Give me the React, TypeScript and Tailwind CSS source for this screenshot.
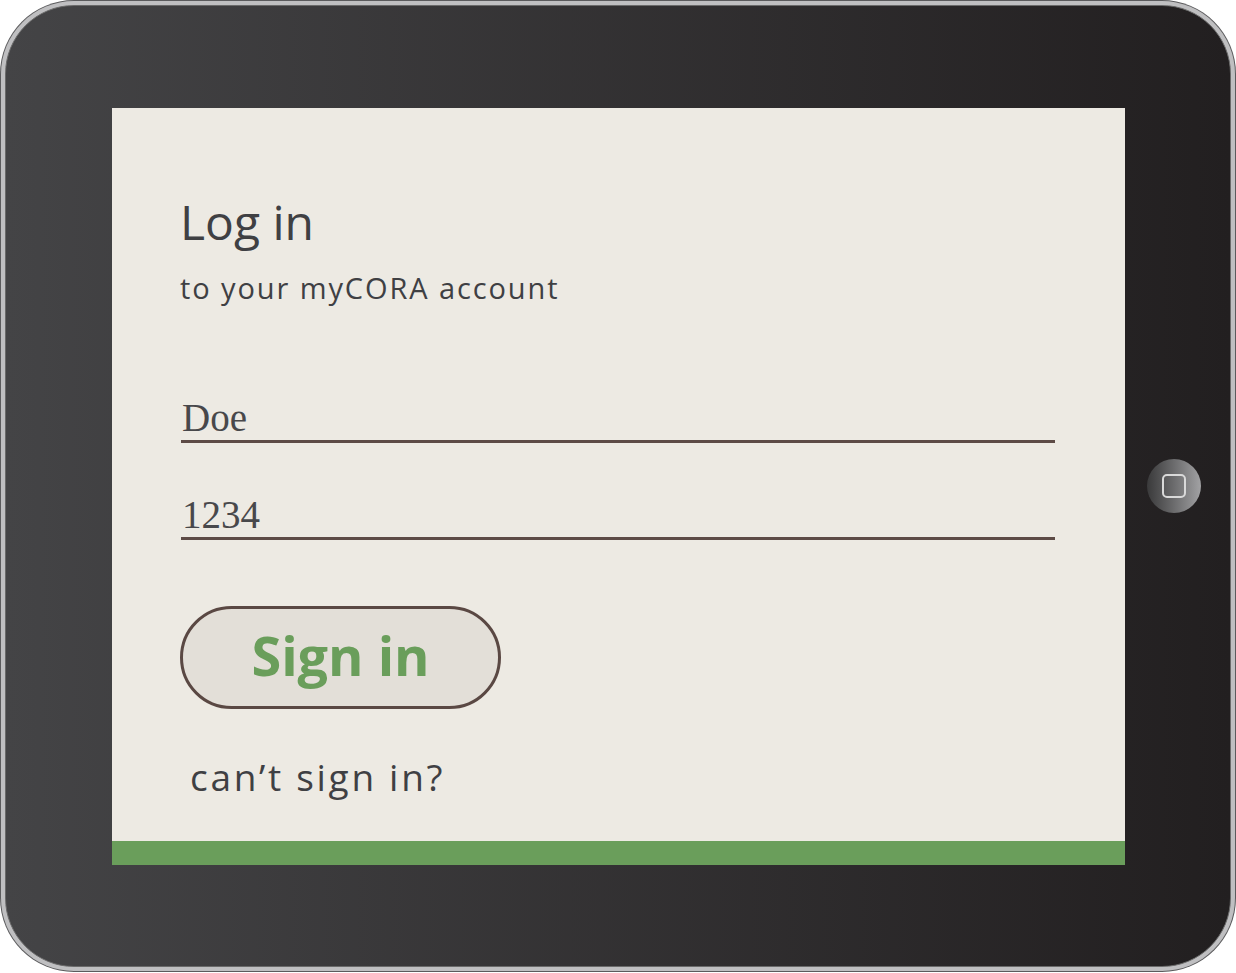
export default function App() {
  return (
    <div className="w-[1236px] h-[973px] bg-white">
      {/* Tablet frame */}
      <div className="w-[1236px] h-[972px] rounded-[74px] bg-[#5b5b5d] p-[1px]">
        <div className="w-full h-full rounded-[73px] bg-[#bfbfc1] p-[4px]">
          <div className="w-full h-full rounded-[69px] bg-gradient-to-r from-[#444446] to-[#221f20] border border-[#6a6a6a] flex items-center pl-[106px]">
            {/* Screen */}
            <div className="w-[1013px] h-[757px] bg-[#edeae3] flex flex-col">
              <div
                className="flex-1 pl-[68px] pr-[70px] pt-[87px] text-[#3f4043]"
                style={{ fontFamily: '"Open Sans", "Noto Sans", sans-serif' }}
              >
                <h1 className="text-[48px] leading-[54px]">Log in</h1>
                <p className="text-[29px] leading-[34px] mt-[22px] tracking-[1.9px]">to your myCORA account</p>

                <div className="mt-[91px] text-[#48484b]" style={{ fontFamily: '"Liberation Serif", serif' }}>
                  <div className="text-[39px] leading-[44px] pl-[1px] border-b-[3px] border-[#5d4b46] ml-[1px]">Doe</div>
                  <div className="text-[39px] leading-[44px] pl-[1px] border-b-[3px] border-[#5d4b46] ml-[1px] mt-[50px]">1234</div>
                </div>

                <button className="mt-[66px] w-[321px] h-[103px] rounded-full border-[3px] border-[#5a4843] bg-[#e3dfd8] flex items-center justify-center">
                  <span className="text-[54px] font-bold text-[#6a9e5b] leading-none -mt-[4px]">Sign in</span>
                </button>

                <p className="text-[37px] leading-[40px] mt-[48px] ml-[10px] tracking-[2.7px]">can’t sign in?</p>
              </div>
              <div className="h-[24px] bg-[#6a9e5b]" />
            </div>

            {/* Home button */}
            <div className="ml-[22px] w-[54px] h-[54px] rounded-full bg-gradient-to-r from-[#3a3a3b] to-[#a2a2a4] flex items-center justify-center">
              <div className="w-[24px] h-[24px] rounded-[5px] border-2 border-[#d9d9d9]" />
            </div>
          </div>
        </div>
      </div>
    </div>
  );
}
